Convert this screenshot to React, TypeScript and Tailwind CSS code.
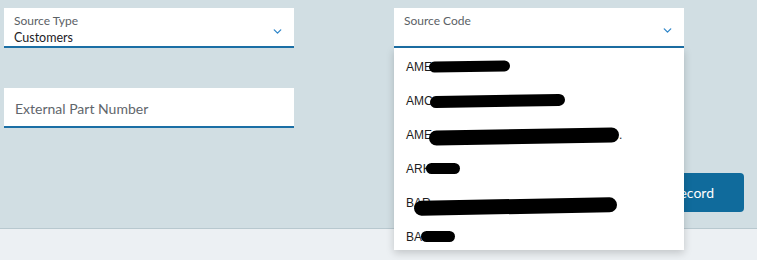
import { ChevronDown } from 'lucide-react'

const options = [
  { prefix: 'AME', blob: 'w-[81px] h-[11px] -rotate-1 ml-[-3px]', tail: '' },
  { prefix: 'AMC', blob: 'w-[135px] h-[12px] rotate-[-1deg] ml-[-3px]', tail: '' },
  { prefix: 'AME', blob: 'w-[190px] h-[15px] -rotate-1 ml-[-3px]', tail: '.' },
  { prefix: 'ARK', blob: 'w-[34px] h-[11px] ml-[-5px]', tail: '' },
  { prefix: 'BAR', blob: 'w-[203px] h-[15px] -rotate-1 ml-[-17px] mt-[3px]', tail: '' },
  { prefix: 'BA', blob: 'w-[34px] h-[11px] ml-[-1px]', tail: '' },
]

function SelectCard({ label, value, chevronTop }: { label: string; value?: string; chevronTop: string }) {
  return (
    <div className="relative h-[40px] bg-white border-b-[2px] border-[#1b6fa5] pl-[10px] pr-[10px] pt-[5px]">
      <p className="text-[12px] leading-[15px] text-[#5b6166]">{label}</p>
      {value && <p className="mt-[2px] text-[12.5px] leading-[16px] text-[#1d2126]">{value}</p>}
      <ChevronDown className={`absolute right-[10px] w-[13px] h-[13px] text-[#2f86c9] ${chevronTop}`} strokeWidth={2.4} />
    </div>
  )
}

export default function App() {
  return (
    <div className="w-[757px] h-[260px] overflow-hidden bg-[#ecf0f3] font-['Lato',sans-serif]">
      <div className="relative h-[229px] bg-[#d1dee3] border-b border-[#b8c8cf] pt-[8px] pl-[4px] pr-[13px]">
        <div className="grid grid-cols-[290px_290px] gap-x-[100px]">
          <div className="flex flex-col gap-[40px]">
            <SelectCard label="Source Type" value="Customers" chevronTop="top-[17px]" />
            <div className="h-[40px] bg-white border-b-[2px] border-[#1b6fa5] pl-[11px] pt-[3px] flex items-center">
              <span className="text-[14px] text-[#5f666c]">External Part Number</span>
            </div>
          </div>
          <div className="relative">
            <SelectCard label="Source Code" chevronTop="top-[16px]" />
            <div className="absolute left-0 top-[40px] z-10 w-[290px] h-[202px] bg-white shadow-[0_3px_8px_rgba(0,0,0,0.18)] pt-[12px] pl-[12px] font-['Liberation_Sans',sans-serif]">
              {options.map((o, i) => (
                <div key={i} className="h-[34px] flex items-start text-[12px] leading-[14px] text-[#1d1d1d]">
                  <span>{o.prefix}</span>
                  <span className={`inline-block mt-[1px] rounded-full bg-black ${o.blob}`} />
                  {o.tail && <span>{o.tail}</span>}
                </div>
              ))}
            </div>
          </div>
        </div>
        <div className="absolute right-[13px] top-[173px]">
          <button className="h-[39px] px-[30px] rounded-[4px] bg-[#106b9c] text-white text-[14px] font-['Lato',sans-serif]">
            Add Record
          </button>
        </div>
      </div>
    </div>
  )
}
